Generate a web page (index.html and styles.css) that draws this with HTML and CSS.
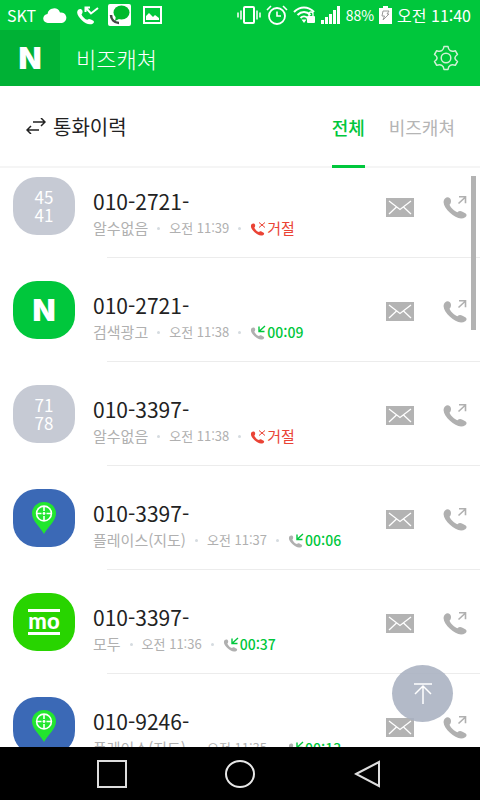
FILE: index.html
```
<!DOCTYPE html>
<html lang="ko">
<head>
  <meta charset="UTF-8">
  <meta name="viewport" content="width=device-width, initial-scale=1.0">
  <title>비즈캐쳐</title>
  <link rel="stylesheet" href="styles.css">
</head>
<body>
  <svg class="sprite" aria-hidden="true">
    <symbol id="handset" viewBox="0 0 26 24">
      <path d="M3 3.500C5 1.500 8 2 8.800 4.800C9.300 7 8.800 8.500 7.500 9.800C9 13 12.300 16.300 15.500 17.300C17 15.700 18.500 15.600 20.500 16.800L23.700 18.600C25 19.600 24.800 21 23.300 22.200C19 25 13 22.700 8 17.800C3 12.700-.5 7.500 3 3.500Z" fill="currentColor"/>
    </symbol>
    <symbol id="mail" viewBox="0 0 28 19">
      <path d="M0 0h28v19H0z" fill="#b3b3b3"/>
      <path d="M3 3l11 8.500L25 3M3 16l7.500-7M25 16l-7.500-7" fill="none" stroke="#fff" stroke-width="1.300"/>
    </symbol>
    <symbol id="call-out" viewBox="0 0 26 24">
      <use href="#handset"/>
      <path d="M16.500 8.500l7-6.500M17 1.800h6.500v6.500" fill="none" stroke="currentColor" stroke-width="1.600"/>
    </symbol>
    <symbol id="call-in" viewBox="0 0 17 15">
      <use href="#handset" width="15" height="14" y="1"/>
      <path d="M15 1L9.500 6M9 1.500v5h5.500" fill="none" stroke="#00c73c" stroke-width="1.400"/>
    </symbol>
    <symbol id="call-reject" viewBox="0 0 17 15">
      <use href="#handset" width="15" height="14" y="1"/>
      <path d="M9 1.500l6 5M15 1.500l-6 5" fill="none" stroke="currentColor" stroke-width="1"/>
    </symbol>
    <symbol id="pin" viewBox="0 0 26 34">
      <path d="M13 33C10 27 1 20 1 12.500a12 11.500 0 0 1 24 0C25 20 16 27 13 33Z" fill="#22e62f"/>
      <circle cx="13" cy="12.500" r="7.400" fill="none" stroke="#fff" stroke-width="1.600"/>
      <path d="M13 5v5M13 15v5M5.500 12.500h5M15.500 12.500h5" stroke="#fff" stroke-width="1.600"/>
      <circle cx="13" cy="12.500" r="1.400" fill="#fff"/>
    </symbol>
  </svg>

  <div class="phone">
    <div class="status-bar">
      <span class="carrier">SKT</span>
      <svg width="24" height="17" viewBox="0 0 24 17"><path d="M5 16a4.500 4.500 0 0 1-.5-9 6.500 6.500 0 0 1 12.500-1.500A5.300 5.300 0 0 1 19 16Z" fill="#fff"/></svg>
      <svg width="23" height="19" viewBox="0 0 23 19"><use href="#handset" width="19" height="18" y="1"/><path d="M9.500 6V1.500H14M10 2l5 5.500L22 2" fill="none" stroke="#fff" stroke-width="2"/></svg>
      <svg class="push" width="23" height="22" viewBox="0 0 23 22"><rect width="23" height="22" rx="2" fill="#fff"/><ellipse cx="13.500" cy="8.500" rx="8" ry="7" fill="#00b92c"/><path d="M8 12l-1 5 6-3Z" fill="#00b92c"/><path d="M3 11c0 4 3 8 8 8" fill="none" stroke="#444" stroke-width="2.500"/></svg>
      <svg class="picture" width="19" height="18" viewBox="0 0 19 18"><rect x="1" y="1" width="17" height="16" fill="none" stroke="#fff" stroke-width="2"/><path d="M3 14V10l3-3 4 4 2-2 4 3v2Z" fill="#fff"/></svg>
      <span class="spacer"></span>
      <svg width="24" height="18" viewBox="0 0 24 18"><rect x="7" y="1" width="10" height="16" rx="1" fill="none" stroke="#fff" stroke-width="2"/><path d="M4 4.500v9M1 6.500v5M20 4.500v9M23 6.500v5" stroke="#fff" stroke-width="1.500"/></svg>
      <svg width="22" height="20" viewBox="0 0 22 20"><circle cx="11" cy="11" r="8" fill="none" stroke="#fff" stroke-width="1.800"/><path d="M11 6.500V11h4M1 5l4-4M21 5l-4-4" fill="none" stroke="#fff" stroke-width="1.600"/></svg>
      <svg width="23" height="18" viewBox="0 0 23 18"><path d="M1 6C7 0 15 0 21 6M4.500 9c4-4 9-4 13 0M7.500 12c2-2 5-2 7 0" fill="none" stroke="#fff" stroke-width="2"/><path d="M8.500 13.500L11 17l2.500-3.500Z" fill="#fff"/><rect x="14" y="10" width="8" height="7" rx="1" fill="#fff"/><path d="M16 10V8a2 2 0 0 1 4 0v2" fill="none" stroke="#fff" stroke-width="1.300"/></svg>
      <svg width="20" height="18" viewBox="0 0 20 18"><path d="M0 14h3v4H0zM4 11h3v7H4zM8 8h3v10H8zM12 4h3v14h-3zM16 0h3v18h-3z" fill="#fff"/></svg>
      <span class="percent">88%</span>
      <svg width="13" height="18" viewBox="0 0 13 18"><path d="M4 0h5v2h4v16H0V2h4z" fill="#fff"/><path d="M4 5h6L8 8h2l-6 6 1.500-4H3Z" fill="none" stroke="#9a9a9a"/></svg>
      <span class="clock">오전 11:40</span>
    </div>

    <header class="app-bar">
      <a class="brand" href="#">N</a>
      <h1>비즈캐쳐</h1>
      <button class="settings" aria-label="설정">
        <svg width="28" height="28" viewBox="0 0 28 28" fill="none" stroke="#d0f0d6" stroke-width="1.500" stroke-linejoin="round">
          <path d="M12 2.500h4C16.500 6.500 19 8.200 23.300 6.700L25.500 10.500C22 13 22 15 25.500 17.500L23.300 21.300C19 19.800 16.500 21.500 16 25.500H12C11.500 21.500 9 19.800 4.700 21.300L2.500 17.500C6 15 6 13 2.500 10.500L4.700 6.700C9 8.200 11.500 6.500 12 2.500Z"/>
          <circle cx="14" cy="14" r="4.800"/>
        </svg>
      </button>
    </header>

    <div class="tab-bar">
      <svg width="20" height="16" viewBox="0 0 20 16" fill="none" stroke="#222" stroke-width="1.500"><path d="M7 4h12M15 0l4 4-4 4M13 12H1M5 8l-4 4 4 4"/></svg>
      <h2>통화이력</h2>
      <nav class="tabs">
        <a class="tab active" href="#">전체</a>
        <a class="tab" href="#">비즈캐쳐</a>
      </nav>
    </div>

    <main class="history">
      <ul class="calls">
        <li class="call">
          <div class="call-row">
            <div class="avatar digits">45<br>41</div>
            <div class="info">
              <div class="number">010-2721-</div>
              <div class="meta"><span>알수없음</span><i class="dot"></i><span class="time">오전 11:39</span><i class="dot"></i><span class="rejected"><svg width="17" height="15"><use href="#call-reject"/></svg>거절</span></div>
            </div>
            <div class="actions">
              <button aria-label="문자"><svg width="28" height="19"><use href="#mail"/></svg></button>
              <button aria-label="전화"><svg width="26" height="24"><use href="#call-out"/></svg></button>
            </div>
          </div>
        </li>
        <li class="call">
          <div class="call-row">
            <div class="avatar naver">N</div>
            <div class="info">
              <div class="number">010-2721-</div>
              <div class="meta"><span>검색광고</span><i class="dot"></i><span class="time">오전 11:38</span><i class="dot"></i><svg width="17" height="15"><use href="#call-in"/></svg><span class="duration">00:09</span></div>
            </div>
            <div class="actions">
              <button aria-label="문자"><svg width="28" height="19"><use href="#mail"/></svg></button>
              <button aria-label="전화"><svg width="26" height="24"><use href="#call-out"/></svg></button>
            </div>
          </div>
        </li>
        <li class="call">
          <div class="call-row">
            <div class="avatar digits">71<br>78</div>
            <div class="info">
              <div class="number">010-3397-</div>
              <div class="meta"><span>알수없음</span><i class="dot"></i><span class="time">오전 11:38</span><i class="dot"></i><span class="rejected"><svg width="17" height="15"><use href="#call-reject"/></svg>거절</span></div>
            </div>
            <div class="actions">
              <button aria-label="문자"><svg width="28" height="19"><use href="#mail"/></svg></button>
              <button aria-label="전화"><svg width="26" height="24"><use href="#call-out"/></svg></button>
            </div>
          </div>
        </li>
        <li class="call">
          <div class="call-row">
            <div class="avatar place"><svg width="26" height="34"><use href="#pin"/></svg></div>
            <div class="info">
              <div class="number">010-3397-</div>
              <div class="meta"><span>플레이스(지도)</span><i class="dot"></i><span class="time">오전 11:37</span><i class="dot"></i><svg width="17" height="15"><use href="#call-in"/></svg><span class="duration">00:06</span></div>
            </div>
            <div class="actions">
              <button aria-label="문자"><svg width="28" height="19"><use href="#mail"/></svg></button>
              <button aria-label="전화"><svg width="26" height="24"><use href="#call-out"/></svg></button>
            </div>
          </div>
        </li>
        <li class="call">
          <div class="call-row">
            <div class="avatar modoo"><span>mo</span></div>
            <div class="info">
              <div class="number">010-3397-</div>
              <div class="meta"><span>모두</span><i class="dot"></i><span class="time">오전 11:36</span><i class="dot"></i><svg width="17" height="15"><use href="#call-in"/></svg><span class="duration">00:37</span></div>
            </div>
            <div class="actions">
              <button aria-label="문자"><svg width="28" height="19"><use href="#mail"/></svg></button>
              <button aria-label="전화"><svg width="26" height="24"><use href="#call-out"/></svg></button>
            </div>
          </div>
        </li>
        <li class="call">
          <div class="call-row">
            <div class="avatar place"><svg width="26" height="34"><use href="#pin"/></svg></div>
            <div class="info">
              <div class="number">010-9246-</div>
              <div class="meta"><span>플레이스(지도)</span><i class="dot"></i><span class="time">오전 11:35</span><i class="dot"></i><svg width="17" height="15"><use href="#call-in"/></svg><span class="duration">00:13</span></div>
            </div>
            <div class="actions">
              <button aria-label="문자"><svg width="28" height="19"><use href="#mail"/></svg></button>
              <button aria-label="전화"><svg width="26" height="24"><use href="#call-out"/></svg></button>
            </div>
          </div>
        </li>
      </ul>
      <div class="scroll-thumb"></div>
      <button class="to-top" aria-label="맨 위로">
        <svg width="20" height="22" viewBox="0 0 20 22" fill="none" stroke="#fff" stroke-width="1.500"><path d="M1 1h18M10 21V3M2 11l8-8 8 8"/></svg>
      </button>
    </main>

    <div class="nav-bar">
      <button aria-label="최근 앱"><svg width="30" height="28" viewBox="0 0 30 28"><rect x="1" y="1" width="28" height="26" fill="none" stroke="#ddd" stroke-width="2"/></svg></button>
      <button aria-label="홈"><svg width="30" height="28" viewBox="0 0 30 28"><ellipse cx="15" cy="14" rx="14" ry="13" fill="none" stroke="#e8e8e8" stroke-width="2"/></svg></button>
      <button aria-label="뒤로"><svg width="28" height="28" viewBox="0 0 28 28"><path d="M2 14L25 2v24Z" fill="none" stroke="#ddd" stroke-width="2"/></svg></button>
    </div>
  </div>
</body>
</html>
```

FILE: styles.css
```
* {
  box-sizing: border-box;
}

body {
  margin: 0;
  background: #fff;
  color: #222;
  font-family: "Noto Sans CJK KR", sans-serif;
}

button {
  display: flex;
  align-items: center;
  justify-content: center;
  padding: 0;
  border: none;
  background: none;
  color: inherit;
  cursor: pointer;
}

a {
  color: inherit;
  text-decoration: none;
}

svg {
  flex: none;
  display: block;
}

.sprite {
  position: absolute;
  width: 0;
  height: 0;
}

.phone {
  display: flex;
  flex-direction: column;
  height: 100vh;
}

/* status bar */
.status-bar {
  display: flex;
  align-items: center;
  gap: 5px;
  height: 30px;
  padding: 0 9px 0 7px;
  background: #00c73c;
  color: #fff;
  font-size: 16px;
  line-height: 30px;
  white-space: nowrap;
}

.carrier {
  font-size: 16px;
  margin-right: 2px;
}

.status-bar svg:nth-of-type(2),
.push {
  margin-left: 4px;
}

.picture {
  margin-left: 7px;
}

.spacer {
  flex: 1;
}

.percent {
  font-size: 14px;
}

/* app bar */
.app-bar {
  display: flex;
  align-items: center;
  height: 56px;
  padding-right: 20px;
  background: #00c73c;
  color: #fff;
}

.brand {
  width: 60px;
  background: #00b135;
  text-align: center;
  line-height: 56px;
}

.brand,
.naver {
  font-family: Inter, sans-serif;
  font-size: 30px;
  font-weight: 900;
}

h1 {
  flex: 1;
  margin: 0 0 0 16px;
  font-size: 22px;
  font-weight: 300;
}

/* tabs */
.tab-bar {
  display: flex;
  align-items: center;
  height: 82px;
  padding: 0 25px 0 26px;
  border-bottom: 2px solid #f5f5f5;
}

h2 {
  flex: 1;
  margin: 0 0 0 7px;
  font-size: 20px;
  font-weight: 400;
}

.tabs {
  display: flex;
  gap: 24px;
  margin-bottom: -2px;
}

.tab {
  padding-top: 3px;
  border-bottom: 3px solid transparent;
  color: #b5b5b5;
  font-size: 18px;
  line-height: 76px;
}

.tab.active {
  border-color: #00c73c;
  color: #00c73c;
  font-weight: 500;
}

/* call list */
.history {
  position: relative;
  flex: 1;
  min-height: 0;
  overflow: hidden;
}

.calls {
  height: 100%;
  margin: 0;
  padding: 0;
  overflow: hidden;
  list-style: none;
}

.call-row {
  display: flex;
  align-items: flex-start;
  padding: 23px 12px 17px 13px;
}

.call:first-child .call-row {
  padding-top: 9px;
}

.call::after {
  content: "";
  display: block;
  height: 1px;
  margin-left: 107px;
  background: #ececec;
}

.avatar {
  display: flex;
  align-items: center;
  justify-content: center;
  flex: none;
  width: 62px;
  height: 58px;
  border-radius: 24px;
  color: #fff;
}

.digits {
  background: #c6cad4;
  font-size: 17px;
  line-height: 18px;
}

.naver {
  background: #00c73c;
}

.place {
  background: #3b69b6;
}

.modoo {
  background: #28d400;
  font-family: Lato, sans-serif;
  font-size: 22px;
  font-weight: 900;
}

.modoo span {
  border: solid #fff;
  border-width: 3px 0;
  line-height: 18px;
  padding-bottom: 2px;
}

.info {
  flex: 1;
  padding: 9px 0 0 18px;
  white-space: nowrap;
}

.number {
  font-size: 21px;
  line-height: 30px;
}

.meta {
  display: flex;
  align-items: center;
  color: #b0b0b0;
  font-size: 15px;
  line-height: 24px;
}

.time {
  font-size: 13px;
}

.duration {
  color: #00c73c;
  font-size: 14px;
  font-weight: 500;
}

.rejected {
  display: flex;
  align-items: center;
  color: #ea4335;
}

.dot {
  width: 3px;
  height: 3px;
  margin: 0 9px;
  border-radius: 50%;
  background: #d5dbe0;
}

.actions {
  display: flex;
  align-items: center;
  gap: 28px;
  height: 60px;
  color: #b0b0b0;
}

.scroll-thumb {
  position: absolute;
  top: 8px;
  right: 4px;
  width: 5px;
  height: 154px;
  background: #b3b3b3;
}

.to-top {
  position: absolute;
  right: 27px;
  bottom: 25px;
  width: 61px;
  height: 57px;
  border-radius: 50%;
  background: rgba(168, 176, 192, 0.88);
}

/* navigation keys */
.nav-bar {
  display: grid;
  grid-template-columns: repeat(3, 1fr);
  height: 53px;
  padding: 0 10%;
  background: #000;
}
```
